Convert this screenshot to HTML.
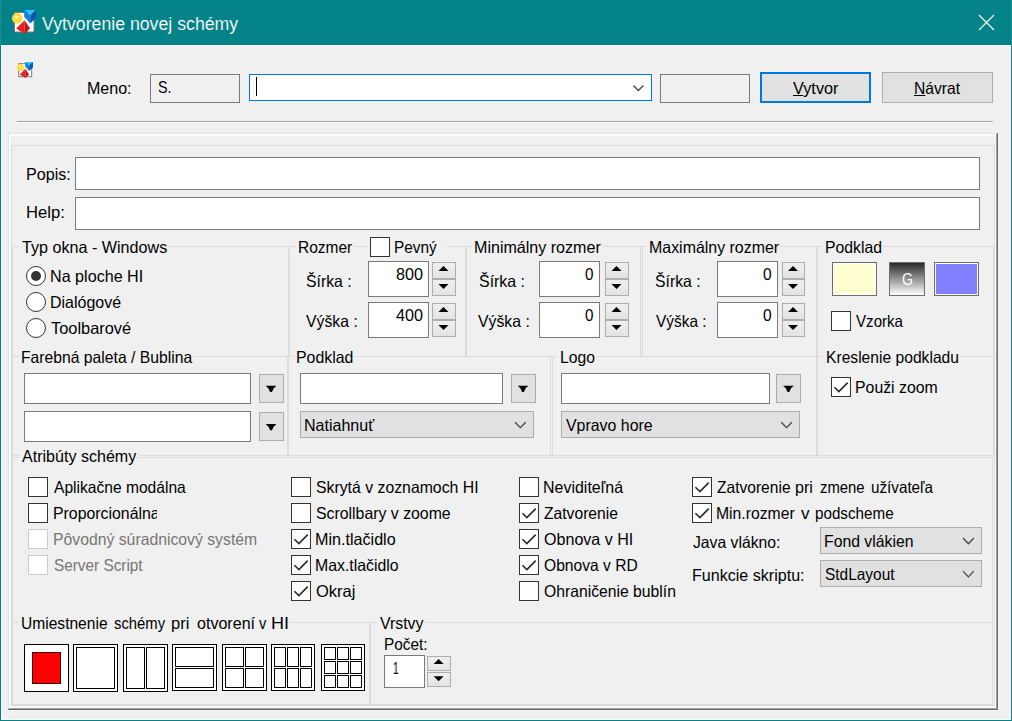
<!DOCTYPE html>
<html lang="sk"><head><meta charset="utf-8"><title>Vytvorenie novej schémy</title>
<style>
html,body{margin:0;padding:0;}
body{width:1012px;height:721px;overflow:hidden;background:#f0f0f0;position:relative;font-family:"Liberation Sans", sans-serif;}
.b{position:absolute;box-sizing:border-box;}
.t{position:absolute;white-space:nowrap;font:16.5px/20px "Liberation Sans", sans-serif;color:#000;transform-origin:0 0;}
.t u{text-decoration:underline;text-underline-offset:1px;}
.ed{background:#fff;border:1px solid #7a7a7a;}
.edd{background:#f0f0f0;border:1px solid #7a7a7a;}
.btn{background:#e1e1e1;border:1px solid #adadad;}
.cb{background:#fff;border:1px solid #333;}
.cbd{background:#fff;border:1px solid #cccccc;}
.rb{background:#fff;border:1px solid #333;border-radius:50%;}
svg{position:absolute;left:0;top:0;}
</style></head><body>
<div class="b " style="left:0px;top:0px;width:1012px;height:45px;background:#038387"></div>
<div class="b" style="left:0px;top:0px;width:1px;height:45px;background:#1d8f92"></div>
<div class="b" style="left:1011px;top:0px;width:1px;height:45px;background:#1d8f92"></div>
<div class="b" style="left:0px;top:45px;width:1px;height:676px;background:#038387"></div>
<div class="b" style="left:1011px;top:45px;width:1px;height:676px;background:#038387"></div>
<div class="b" style="left:0px;top:720px;width:1012px;height:1px;background:#038387"></div>
<div class="b" style="left:1px;top:45px;width:1010px;height:1px;background:#fff"></div>
<div class="b" style="left:1px;top:45px;width:1px;height:675px;background:#fff"></div>
<div class="b" style="left:1010px;top:45px;width:1px;height:675px;background:#fff"></div>
<div class="b" style="left:1px;top:719px;width:1010px;height:1px;background:#fff"></div>
<div class="b" style="left:17px;top:121px;width:976px;height:1px;background:#a0a0a0"></div>
<div class="b" style="left:17px;top:122px;width:976px;height:1px;background:#fff"></div>
<div class="b" style="left:8px;top:133px;width:990px;height:1px;background:#e3e3e3"></div>
<div class="b" style="left:8px;top:133px;width:1px;height:576px;background:#e3e3e3"></div>
<div class="b" style="left:9px;top:134px;width:988px;height:1px;background:#fff"></div>
<div class="b" style="left:9px;top:134px;width:1px;height:574px;background:#fff"></div>
<div class="b" style="left:10px;top:135px;width:1px;height:573px;background:#f8f8f8"></div>
<div class="b" style="left:10px;top:135px;width:986px;height:1px;background:#f8f8f8"></div>
<div class="b" style="left:9px;top:708px;width:989px;height:1px;background:#a0a0a0"></div>
<div class="b" style="left:996px;top:134px;width:1px;height:575px;background:#a0a0a0"></div>
<div class="b" style="left:8px;top:709px;width:991px;height:1px;background:#696969"></div>
<div class="b" style="left:997px;top:133px;width:1px;height:577px;background:#696969"></div>
<div class="b" style="left:11px;top:145px;width:984px;height:1px;background:#dcdcdc"></div>
<div class="b" style="left:12px;top:246px;width:7px;height:1px;background:#dcdcdc"></div>
<div class="b" style="left:168px;top:246px;width:128px;height:1px;background:#dcdcdc"></div>
<div class="b" style="left:354px;top:246px;width:13px;height:1px;background:#dcdcdc"></div>
<div class="b" style="left:446px;top:246px;width:26px;height:1px;background:#dcdcdc"></div>
<div class="b" style="left:603px;top:246px;width:44px;height:1px;background:#dcdcdc"></div>
<div class="b" style="left:781px;top:246px;width:42px;height:1px;background:#dcdcdc"></div>
<div class="b" style="left:883px;top:246px;width:111px;height:1px;background:#dcdcdc"></div>
<div class="b" style="left:12px;top:356px;width:7px;height:1px;background:#dcdcdc"></div>
<div class="b" style="left:194px;top:356px;width:100px;height:1px;background:#dcdcdc"></div>
<div class="b" style="left:354px;top:356px;width:203px;height:1px;background:#dcdcdc"></div>
<div class="b" style="left:596px;top:356px;width:227px;height:1px;background:#dcdcdc"></div>
<div class="b" style="left:960px;top:356px;width:34px;height:1px;background:#dcdcdc"></div>
<div class="b" style="left:12px;top:455px;width:7px;height:1px;background:#dcdcdc"></div>
<div class="b" style="left:138px;top:455px;width:856px;height:1px;background:#dcdcdc"></div>
<div class="b" style="left:12px;top:457px;width:7px;height:1px;background:#dcdcdc"></div>
<div class="b" style="left:138px;top:457px;width:855px;height:1px;background:#dcdcdc"></div>
<div class="b" style="left:12px;top:622px;width:7px;height:1px;background:#dcdcdc"></div>
<div class="b" style="left:290px;top:622px;width:87px;height:1px;background:#dcdcdc"></div>
<div class="b" style="left:426px;top:622px;width:567px;height:1px;background:#dcdcdc"></div>
<div class="b" style="left:12px;top:704px;width:981px;height:1px;background:#dcdcdc"></div>
<div class="b" style="left:11px;top:705px;width:984px;height:1px;background:#dcdcdc"></div>
<div class="b" style="left:11px;top:145px;width:1px;height:561px;background:#dcdcdc"></div>
<div class="b" style="left:994px;top:145px;width:1px;height:561px;background:#dcdcdc"></div>
<div class="b" style="left:12px;top:246px;width:1px;height:459px;background:#dcdcdc"></div>
<div class="b" style="left:993px;top:246px;width:1px;height:210px;background:#dcdcdc"></div>
<div class="b" style="left:992px;top:457px;width:1px;height:248px;background:#dcdcdc"></div>
<div class="b" style="left:288px;top:246px;width:1px;height:111px;background:#dcdcdc"></div>
<div class="b" style="left:289px;top:246px;width:1px;height:111px;background:#dcdcdc"></div>
<div class="b" style="left:465px;top:246px;width:1px;height:111px;background:#dcdcdc"></div>
<div class="b" style="left:466px;top:246px;width:1px;height:111px;background:#dcdcdc"></div>
<div class="b" style="left:640px;top:246px;width:1px;height:111px;background:#dcdcdc"></div>
<div class="b" style="left:642px;top:246px;width:1px;height:111px;background:#dcdcdc"></div>
<div class="b" style="left:816px;top:246px;width:1px;height:111px;background:#dcdcdc"></div>
<div class="b" style="left:817px;top:246px;width:1px;height:111px;background:#dcdcdc"></div>
<div class="b" style="left:287px;top:356px;width:1px;height:100px;background:#dcdcdc"></div>
<div class="b" style="left:288px;top:356px;width:1px;height:100px;background:#dcdcdc"></div>
<div class="b" style="left:550px;top:356px;width:1px;height:100px;background:#dcdcdc"></div>
<div class="b" style="left:552px;top:356px;width:1px;height:100px;background:#dcdcdc"></div>
<div class="b" style="left:816px;top:356px;width:1px;height:100px;background:#dcdcdc"></div>
<div class="b" style="left:817px;top:356px;width:1px;height:100px;background:#dcdcdc"></div>
<div class="b" style="left:369px;top:622px;width:1px;height:83px;background:#dcdcdc"></div>
<div class="b" style="left:370px;top:622px;width:1px;height:83px;background:#dcdcdc"></div>
<div class="b" style="left:998px;top:134px;width:1px;height:576px;background:#f8f8f8"></div>
<div class="b" style="left:9px;top:710px;width:990px;height:1px;background:#f8f8f8"></div>
<div class="b" style="left:10px;top:706px;width:986px;height:1px;background:#f8f8f8"></div>
<div class="b" style="left:10px;top:707px;width:986px;height:1px;background:#fbfbfb"></div>
<div class="b" style="left:995px;top:135px;width:1px;height:573px;background:#f8f8f8"></div>
<div class="b edd" style="left:150px;top:74px;width:90px;height:29px;"></div>
<div class="b ed" style="left:249px;top:74px;width:403px;height:27px;border-color:#0078d7"></div>
<div class="b" style="left:256px;top:77px;width:1px;height:19px;background:#000"></div>
<div class="b edd" style="left:660px;top:74px;width:90px;height:29px;"></div>
<div class="b btn" style="left:760px;top:72px;width:111px;height:31px;border:2px solid #0078d7"></div>
<div class="b btn" style="left:882px;top:72px;width:111px;height:31px;"></div>
<div class="b ed" style="left:75px;top:157px;width:905px;height:33px;"></div>
<div class="b ed" style="left:75px;top:197px;width:905px;height:33px;"></div>
<div class="b rb" style="left:26px;top:266px;width:20px;height:20px;"></div>
<div class="b rb" style="left:26px;top:292px;width:20px;height:20px;"></div>
<div class="b rb" style="left:26px;top:318px;width:20px;height:20px;"></div>
<div class="b " style="left:31px;top:271px;width:10px;height:10px;background:#333;border-radius:50%"></div>
<div class="b cb" style="left:370px;top:237px;width:20px;height:20px;"></div>
<div class="b ed" style="left:368px;top:261px;width:61px;height:36px;"></div>
<div class="b " style="left:432px;top:262px;width:24px;height:17px;background:linear-gradient(#efefef,#e3e3e3);border:1px solid #adadad"></div>
<div class="b " style="left:432px;top:279px;width:24px;height:17px;background:linear-gradient(#efefef,#e3e3e3);border:1px solid #adadad"></div>
<div class="b ed" style="left:368px;top:302px;width:61px;height:36px;"></div>
<div class="b " style="left:432px;top:303px;width:24px;height:17px;background:linear-gradient(#efefef,#e3e3e3);border:1px solid #adadad"></div>
<div class="b " style="left:432px;top:320px;width:24px;height:17px;background:linear-gradient(#efefef,#e3e3e3);border:1px solid #adadad"></div>
<div class="b ed" style="left:539px;top:261px;width:61px;height:36px;"></div>
<div class="b " style="left:605px;top:262px;width:24px;height:17px;background:linear-gradient(#efefef,#e3e3e3);border:1px solid #adadad"></div>
<div class="b " style="left:605px;top:279px;width:24px;height:17px;background:linear-gradient(#efefef,#e3e3e3);border:1px solid #adadad"></div>
<div class="b ed" style="left:539px;top:302px;width:61px;height:36px;"></div>
<div class="b " style="left:605px;top:303px;width:24px;height:17px;background:linear-gradient(#efefef,#e3e3e3);border:1px solid #adadad"></div>
<div class="b " style="left:605px;top:320px;width:24px;height:17px;background:linear-gradient(#efefef,#e3e3e3);border:1px solid #adadad"></div>
<div class="b ed" style="left:717px;top:261px;width:61px;height:36px;"></div>
<div class="b " style="left:782px;top:262px;width:23px;height:17px;background:linear-gradient(#efefef,#e3e3e3);border:1px solid #adadad"></div>
<div class="b " style="left:782px;top:279px;width:23px;height:17px;background:linear-gradient(#efefef,#e3e3e3);border:1px solid #adadad"></div>
<div class="b ed" style="left:717px;top:302px;width:61px;height:36px;"></div>
<div class="b " style="left:782px;top:303px;width:23px;height:17px;background:linear-gradient(#efefef,#e3e3e3);border:1px solid #adadad"></div>
<div class="b " style="left:782px;top:320px;width:23px;height:17px;background:linear-gradient(#efefef,#e3e3e3);border:1px solid #adadad"></div>
<div class="b ed" style="left:384px;top:655px;width:41px;height:33px;"></div>
<div class="b " style="left:427px;top:656px;width:24px;height:15px;background:linear-gradient(#efefef,#e3e3e3);border:1px solid #adadad"></div>
<div class="b " style="left:427px;top:672px;width:24px;height:15px;background:linear-gradient(#efefef,#e3e3e3);border:1px solid #adadad"></div>
<div class="b " style="left:832px;top:262px;width:45px;height:34px;background:#ffffd2;border:1px solid #6e6e6e;box-shadow:inset 0 0 0 1px #fff"></div>
<div class="b " style="left:889px;top:262px;width:36px;height:34px;background:linear-gradient(#2a2a2a,#fff);border:1px solid #6e6e6e"></div>
<div class="b " style="left:934px;top:262px;width:45px;height:34px;background:#8080ff;border:1px solid #6e6e6e;box-shadow:inset 0 0 0 1px #fffff0"></div>
<div class="b cb" style="left:831px;top:311px;width:20px;height:20px;"></div>
<div class="b cb" style="left:831px;top:377px;width:20px;height:20px;"></div>
<div class="b ed" style="left:24px;top:373px;width:227px;height:31px;"></div>
<div class="b ed" style="left:24px;top:411px;width:227px;height:31px;"></div>
<div class="b btn" style="left:259px;top:374px;width:25px;height:29px;"></div>
<div class="b btn" style="left:259px;top:412px;width:25px;height:29px;"></div>
<div class="b ed" style="left:300px;top:373px;width:203px;height:31px;"></div>
<div class="b btn" style="left:511px;top:374px;width:25px;height:29px;"></div>
<div class="b btn" style="left:300px;top:411px;width:234px;height:27px;"></div>
<div class="b ed" style="left:561px;top:373px;width:209px;height:31px;"></div>
<div class="b btn" style="left:776px;top:374px;width:25px;height:29px;"></div>
<div class="b btn" style="left:561px;top:411px;width:239px;height:27px;"></div>
<div class="b cb" style="left:28px;top:477px;width:20px;height:20px;"></div>
<div class="b cb" style="left:28px;top:503px;width:20px;height:20px;"></div>
<div class="b cbd" style="left:28px;top:529px;width:20px;height:20px;"></div>
<div class="b cbd" style="left:28px;top:555px;width:20px;height:20px;"></div>
<div class="b cb" style="left:291px;top:477px;width:20px;height:20px;"></div>
<div class="b cb" style="left:291px;top:503px;width:20px;height:20px;"></div>
<div class="b cb" style="left:291px;top:529px;width:20px;height:20px;"></div>
<div class="b cb" style="left:291px;top:555px;width:20px;height:20px;"></div>
<div class="b cb" style="left:291px;top:581px;width:20px;height:20px;"></div>
<div class="b cb" style="left:519px;top:477px;width:20px;height:20px;"></div>
<div class="b cb" style="left:519px;top:503px;width:20px;height:20px;"></div>
<div class="b cb" style="left:519px;top:529px;width:20px;height:20px;"></div>
<div class="b cb" style="left:519px;top:555px;width:20px;height:20px;"></div>
<div class="b cb" style="left:519px;top:581px;width:20px;height:20px;"></div>
<div class="b cb" style="left:692px;top:477px;width:20px;height:20px;"></div>
<div class="b cb" style="left:692px;top:503px;width:20px;height:20px;"></div>
<div class="b btn" style="left:820px;top:527px;width:162px;height:27px;"></div>
<div class="b btn" style="left:820px;top:560px;width:162px;height:27px;"></div>
<div class="b " style="left:24px;top:644px;width:45px;height:48px;background:#fff;border:1px solid #000"></div>
<div class="b " style="left:32px;top:652px;width:29px;height:32px;background:#ff0000;border:1px solid #3a0000"></div>
<div class="b " style="left:73px;top:644px;width:45px;height:48px;background:#fff;border:1px solid #000"></div>
<div class="b " style="left:76px;top:647px;width:39px;height:42px;border:1px solid #000"></div>
<div class="b " style="left:123px;top:644px;width:45px;height:48px;background:#fff;border:1px solid #000"></div>
<div class="b " style="left:126px;top:647px;width:19px;height:42px;border:1px solid #000"></div>
<div class="b " style="left:146px;top:647px;width:19px;height:42px;border:1px solid #000"></div>
<div class="b " style="left:172px;top:644px;width:45px;height:47px;background:#fff;border:1px solid #000"></div>
<div class="b " style="left:175px;top:647px;width:39px;height:20px;border:1px solid #000"></div>
<div class="b " style="left:175px;top:668px;width:39px;height:20px;border:1px solid #000"></div>
<div class="b " style="left:222px;top:644px;width:45px;height:47px;background:#fff;border:1px solid #000"></div>
<div class="b " style="left:225px;top:647px;width:19px;height:20px;border:1px solid #000"></div>
<div class="b " style="left:245px;top:647px;width:19px;height:20px;border:1px solid #000"></div>
<div class="b " style="left:225px;top:668px;width:19px;height:20px;border:1px solid #000"></div>
<div class="b " style="left:245px;top:668px;width:19px;height:20px;border:1px solid #000"></div>
<div class="b " style="left:271px;top:644px;width:44px;height:47px;background:#fff;border:1px solid #000"></div>
<div class="b " style="left:274px;top:647px;width:12px;height:20px;border:1px solid #000"></div>
<div class="b " style="left:274px;top:668px;width:12px;height:20px;border:1px solid #000"></div>
<div class="b " style="left:287px;top:647px;width:12px;height:20px;border:1px solid #000"></div>
<div class="b " style="left:287px;top:668px;width:12px;height:20px;border:1px solid #000"></div>
<div class="b " style="left:300px;top:647px;width:12px;height:20px;border:1px solid #000"></div>
<div class="b " style="left:300px;top:668px;width:12px;height:20px;border:1px solid #000"></div>
<div class="b " style="left:321px;top:644px;width:44px;height:47px;background:#fff;border:1px solid #000"></div>
<div class="b " style="left:324px;top:647px;width:12px;height:13px;border:1px solid #000"></div>
<div class="b " style="left:324px;top:661px;width:12px;height:13px;border:1px solid #000"></div>
<div class="b " style="left:324px;top:675px;width:12px;height:13px;border:1px solid #000"></div>
<div class="b " style="left:337px;top:647px;width:12px;height:13px;border:1px solid #000"></div>
<div class="b " style="left:337px;top:661px;width:12px;height:13px;border:1px solid #000"></div>
<div class="b " style="left:337px;top:675px;width:12px;height:13px;border:1px solid #000"></div>
<div class="b " style="left:350px;top:647px;width:12px;height:13px;border:1px solid #000"></div>
<div class="b " style="left:350px;top:661px;width:12px;height:13px;border:1px solid #000"></div>
<div class="b " style="left:350px;top:675px;width:12px;height:13px;border:1px solid #000"></div>
<span class="t" style="left:42.06px;top:14.00px;transform:scaleX(1.0119);font-size:17.5px;color:#fff;-webkit-text-stroke:0.15px #038387;">Vytvorenie novej schémy</span>
<span class="t" style="left:86.63px;top:78.00px;transform:scaleX(0.9712);">Meno:</span>
<span class="t" style="left:157.60px;top:77.00px;transform:scaleX(0.8664);">S.</span>
<span class="t" style="left:792.64px;top:78.00px;transform:scaleX(0.9849);"><u>V</u>ytvor</span>
<span class="t" style="left:913.65px;top:78.00px;transform:scaleX(0.9491);"><u>N</u>ávrat</span>
<span class="t" style="left:25.89px;top:164.00px;transform:scaleX(0.9761);">Popis:</span>
<span class="t" style="left:25.86px;top:202.00px;transform:scaleX(1.0077);">Help:</span>
<span class="t" style="left:21.60px;top:237.00px;transform:scaleX(0.9777);">Typ okna - Windows</span>
<span class="t" style="left:297.66px;top:237.00px;transform:scaleX(0.9388);">Rozmer</span>
<span class="t" style="left:393.93px;top:237.00px;transform:scaleX(0.9312);">Pevný</span>
<span class="t" style="left:474.13px;top:237.00px;transform:scaleX(0.9735);">Minimálny rozmer</span>
<span class="t" style="left:648.89px;top:237.00px;transform:scaleX(0.9654);">Maximálny rozmer</span>
<span class="t" style="left:824.65px;top:237.00px;transform:scaleX(0.9551);">Podklad</span>
<span class="t" style="left:20.65px;top:347.00px;transform:scaleX(0.9520);">Farebná paleta / Bublina</span>
<span class="t" style="left:295.90px;top:347.00px;transform:scaleX(0.9617);">Podklad</span>
<span class="t" style="left:559.60px;top:347.00px;transform:scaleX(0.9516);">Logo</span>
<span class="t" style="left:825.57px;top:347.00px;transform:scaleX(0.9476);">Kreslenie podkladu</span>
<span class="t" style="left:22.06px;top:446.00px;transform:scaleX(0.9737);">Atribúty schémy</span>
<span class="t" style="left:20.74px;top:613.00px;transform:scaleX(0.9438);">Umiestnenie</span>
<span class="t" style="left:114.02px;top:613.00px;transform:scaleX(0.8987);">schémy</span>
<span class="t" style="left:171.09px;top:613.00px;transform:scaleX(0.9971);">pri</span>
<span class="t" style="left:196.52px;top:613.00px;transform:scaleX(0.9735);">otvorení</span>
<span class="t" style="left:259.02px;top:613.00px;transform:scaleX(0.8889);">v</span>
<span class="t" style="left:271.09px;top:613.00px;transform:scaleX(1.0932);">HI</span>
<span class="t" style="left:380.10px;top:613.00px;transform:scaleX(0.9618);">Vrstvy</span>
<span class="t" style="left:49.63px;top:266.00px;transform:scaleX(0.9777);">Na ploche HI</span>
<span class="t" style="left:49.63px;top:292.00px;transform:scaleX(0.9695);">Dialógové</span>
<span class="t" style="left:50.60px;top:318.00px;transform:scaleX(0.9933);">Toolbarové</span>
<span class="t" style="left:305.60px;top:271.00px;transform:scaleX(0.9555);">Šírka :</span>
<span class="t" style="left:305.60px;top:311.00px;transform:scaleX(0.9570);">Výška :</span>
<span class="t" style="left:478.85px;top:271.00px;transform:scaleX(0.9655);">Šírka :</span>
<span class="t" style="left:477.60px;top:311.00px;transform:scaleX(0.9570);">Výška :</span>
<span class="t" style="left:655.10px;top:271.00px;transform:scaleX(0.9546);">Šírka :</span>
<span class="t" style="left:655.60px;top:311.00px;transform:scaleX(0.9343);">Výška :</span>
<span class="t" style="left:395.60px;top:264.00px;transform:scaleX(0.9784);">800</span>
<span class="t" style="left:395.60px;top:305.00px;transform:scaleX(0.9784);">400</span>
<span class="t" style="left:584.85px;top:264.00px;transform:scaleX(0.9211);">0</span>
<span class="t" style="left:584.85px;top:305.00px;transform:scaleX(0.9211);">0</span>
<span class="t" style="left:762.60px;top:264.00px;transform:scaleX(0.9425);">0</span>
<span class="t" style="left:762.60px;top:305.00px;transform:scaleX(0.9425);">0</span>
<span class="t" style="left:856.14px;top:311.00px;transform:scaleX(0.9154);">Vzorka</span>
<span class="t" style="left:854.64px;top:377.00px;transform:scaleX(0.9605);">Použi zoom</span>
<span class="t" style="left:304.13px;top:415.00px;transform:scaleX(0.9716);">Natiahnuť</span>
<span class="t" style="left:566.10px;top:415.00px;transform:scaleX(0.9643);">Vpravo hore</span>
<span class="t" style="left:53.60px;top:477.00px;transform:scaleX(0.9448);">Aplikačne modálna</span>
<div style="position:absolute;left:0;top:0;width:156.5px;height:721px;overflow:hidden"><span class="t" style="left:52.64px;top:503.00px;transform:scaleX(0.9611);">Proporcionálna</span></div>
<span class="t" style="left:52.64px;top:529.00px;transform:scaleX(0.9555);color:#767676;">Pôvodný súradnicový systém</span>
<span class="t" style="left:53.60px;top:555.00px;transform:scaleX(0.9293);color:#767676;">Server Script</span>
<span class="t" style="left:315.60px;top:477.00px;transform:scaleX(0.9583);">Skrytá v zoznamoch HI</span>
<span class="t" style="left:315.60px;top:503.00px;transform:scaleX(0.9599);">Scrollbary v zoome</span>
<span class="t" style="left:314.62px;top:529.00px;transform:scaleX(0.9773);">Min.tlačidlo</span>
<span class="t" style="left:314.64px;top:555.00px;transform:scaleX(0.9600);">Max.tlačidlo</span>
<span class="t" style="left:315.60px;top:581.00px;transform:scaleX(1.0001);">Okraj</span>
<span class="t" style="left:542.89px;top:477.00px;transform:scaleX(0.9680);">Neviditeľná</span>
<span class="t" style="left:543.85px;top:503.00px;transform:scaleX(0.9483);">Zatvorenie</span>
<span class="t" style="left:543.85px;top:529.00px;transform:scaleX(0.9740);">Obnova v HI</span>
<span class="t" style="left:543.85px;top:555.00px;transform:scaleX(0.9458);">Obnova v RD</span>
<span class="t" style="left:543.85px;top:581.00px;transform:scaleX(0.9524);">Ohraničenie bublín</span>
<span class="t" style="left:716.68px;top:477.00px;transform:scaleX(0.9434);">Zatvorenie</span>
<span class="t" style="left:795.17px;top:477.00px;transform:scaleX(0.9749);">pri</span>
<span class="t" style="left:820.02px;top:477.00px;transform:scaleX(0.9007);">zmene</span>
<span class="t" style="left:870.51px;top:477.00px;transform:scaleX(0.9224);">užívateľa</span>
<span class="t" style="left:715.73px;top:503.00px;transform:scaleX(0.9543);">Min.rozmer</span>
<span class="t" style="left:800.64px;top:503.00px;transform:scaleX(1.0385);">v</span>
<span class="t" style="left:815.47px;top:503.00px;transform:scaleX(0.9213);">podscheme</span>
<span class="t" style="left:692.60px;top:532.00px;transform:scaleX(0.9527);">Java vlákno:</span>
<span class="t" style="left:691.63px;top:565.00px;transform:scaleX(0.9741);">Funkcie skriptu:</span>
<span class="t" style="left:823.73px;top:531.00px;transform:scaleX(0.9561);">Fond vlákien</span>
<span class="t" style="left:824.68px;top:564.00px;transform:scaleX(0.9353);">StdLayout</span>
<span class="t" style="left:383.92px;top:634.00px;transform:scaleX(0.9294);">Počet:</span>
<span class="t" style="left:393.21px;top:658.00px;transform:scaleX(0.6143);">1</span>
<span class="t" style="left:902.14px;top:269.00px;transform:scaleX(0.8550);color:#fff;">G</span>
<svg width="1012" height="721" viewBox="0 0 1012 721"><path d="M979 15l15 15M994 15l-15 15" stroke="#fff" stroke-width="1.2" fill="none"/><path d="M633.4 85.5l5.0 5l5.0 -5" fill="none" stroke="#444" stroke-width="1.3"/><path d="M438.5 271.1h10l-5.0 -5z" fill="#000"/><path d="M438.5 284.1h10l-5.0 5z" fill="#000"/><path d="M438.5 312.1h10l-5.0 -5z" fill="#000"/><path d="M438.5 325.1h10l-5.0 5z" fill="#000"/><path d="M611.5 271.1h10l-5.0 -5z" fill="#000"/><path d="M611.5 284.1h10l-5.0 5z" fill="#000"/><path d="M611.5 312.1h10l-5.0 -5z" fill="#000"/><path d="M611.5 325.1h10l-5.0 5z" fill="#000"/><path d="M788.0 271.1h10l-5.0 -5z" fill="#000"/><path d="M788.0 284.1h10l-5.0 5z" fill="#000"/><path d="M788.0 312.1h10l-5.0 -5z" fill="#000"/><path d="M788.0 325.1h10l-5.0 5z" fill="#000"/><path d="M433.6 664.1h10l-5.0 -5z" fill="#000"/><path d="M433.6 676.2h10l-5.0 5z" fill="#000"/><path d="M265.7 385.79999999999995H276.40000000000003L273.65000000000003 388.4L271.95 392.0H270.15000000000003L268.45 388.4z" fill="#000"/><path d="M265.7 424.09999999999997H276.40000000000003L273.65000000000003 426.7L271.95 430.3H270.15000000000003L268.45 426.7z" fill="#000"/><path d="M517.65 385.7H528.35L525.6 388.3L523.9 391.90000000000003H522.1L520.4 388.3z" fill="#000"/><path d="M783.05 385.7H793.75L791.0 388.3L789.3 391.90000000000003H787.5L785.8 388.3z" fill="#000"/><path d="M515.1 422.2l5.3 5.4l5.3 -5.4" fill="none" stroke="#444" stroke-width="1.3"/><path d="M781.3000000000001 422.2l5.3 5.4l5.3 -5.4" fill="none" stroke="#444" stroke-width="1.3"/><path d="M963.0 538.05l5.4 5.7l5.4 -5.7" fill="none" stroke="#444" stroke-width="1.3"/><path d="M963.0 571.15l5.4 5.7l5.4 -5.7" fill="none" stroke="#444" stroke-width="1.3"/><path d="M834.4 387.2L838.9 391.6L847.7 382.6" fill="none" stroke="#2b2b2b" stroke-width="1.6"/><path d="M294.4 539.2L298.9 543.6L307.7 534.6" fill="none" stroke="#2b2b2b" stroke-width="1.6"/><path d="M294.4 565.2L298.9 569.6L307.7 560.6" fill="none" stroke="#2b2b2b" stroke-width="1.6"/><path d="M294.4 591.2L298.9 595.6L307.7 586.6" fill="none" stroke="#2b2b2b" stroke-width="1.6"/><path d="M522.4 513.2L526.9 517.6L535.7 508.6" fill="none" stroke="#2b2b2b" stroke-width="1.6"/><path d="M522.4 539.2L526.9 543.6L535.7 534.6" fill="none" stroke="#2b2b2b" stroke-width="1.6"/><path d="M522.4 565.2L526.9 569.6L535.7 560.6" fill="none" stroke="#2b2b2b" stroke-width="1.6"/><path d="M695.4 487.2L699.9 491.6L708.7 482.6" fill="none" stroke="#2b2b2b" stroke-width="1.6"/><path d="M695.4 513.2L699.9 517.6L708.7 508.6" fill="none" stroke="#2b2b2b" stroke-width="1.6"/><rect x="14.50" y="12.50" width="19.50" height="19.50" fill="#fff" stroke="#7d7d7d" stroke-width="1"/><circle cx="17.20" cy="18.20" r="5.25" fill="#ffdc3c"/><circle cx="16.30" cy="17.20" r="1.50" fill="#fff6c8"/><path d="M24.20 10.00L36.00 10.00L30.20 15.00z" fill="#2ac4ff"/><path d="M24.20 10.00L30.20 15.00L30.20 23.40L24.20 16.70z" fill="#1682d8"/><path d="M36.00 10.00L30.20 15.00L30.20 23.40L36.00 18.00z" fill="#0659aa"/><path d="M24.60 20.20L16.20 28.60L24.60 34.00z" fill="#f21f1f"/><path d="M24.60 20.20L30.00 28.60L24.60 34.00z" fill="#b81a1a"/><rect x="18.67" y="63.67" width="13.01" height="13.01" fill="#fff" stroke="#7d7d7d" stroke-width="1"/><circle cx="20.47" cy="67.47" r="3.50" fill="#ffdc3c"/><circle cx="19.87" cy="66.80" r="1.00" fill="#fff6c8"/><path d="M25.14 62.00L33.01 62.00L29.14 65.33z" fill="#2ac4ff"/><path d="M25.14 62.00L29.14 65.33L29.14 70.94L25.14 66.47z" fill="#1682d8"/><path d="M33.01 62.00L29.14 65.33L29.14 70.94L33.01 67.34z" fill="#0659aa"/><path d="M25.40 68.80L19.80 74.41L25.40 78.01z" fill="#f21f1f"/><path d="M25.40 68.80L29.01 74.41L25.40 78.01z" fill="#b81a1a"/></svg>
</body></html>
